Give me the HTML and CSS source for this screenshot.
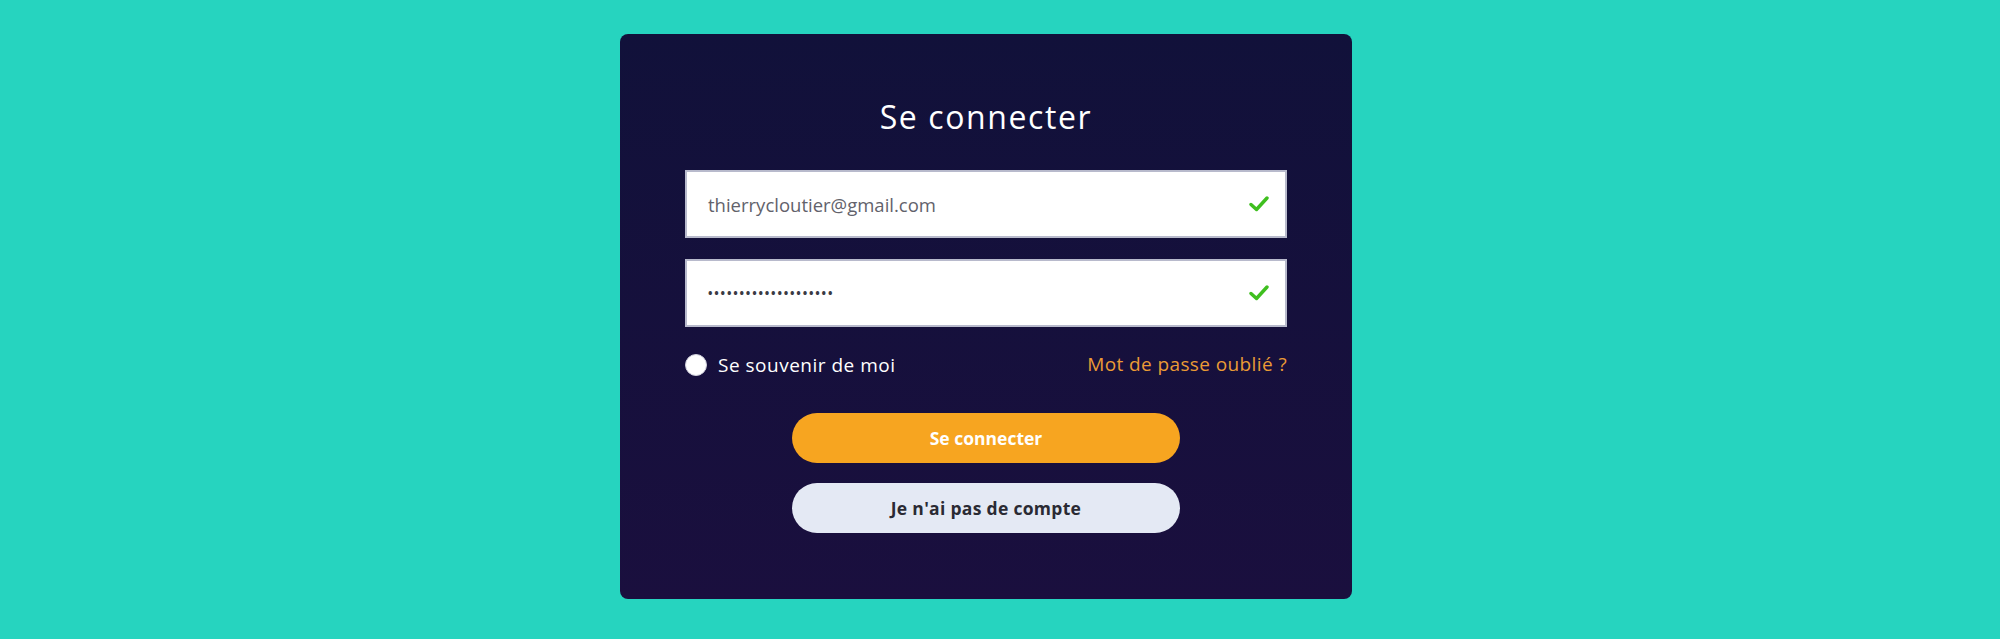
FILE: index.html
```html
<!DOCTYPE html>
<html lang="fr">
<head>
    <meta charset="UTF-8">
    <meta name="viewport" content="width=device-width, initial-scale=1.0">
    <title>Se connecter</title>
    <link rel="stylesheet" href="styles.css">
</head>
<body>
    <div class="page">
        <form class="login-card">
            <h1 class="login-title">Se connecter</h1>

            <div class="field">
                <span class="field-value">thierrycloutier@gmail.com</span>
                <svg class="field-check" viewBox="0 0 20 16" width="20" height="16">
                    <polyline points="2,8.5 7.5,13.5 18,2" />
                </svg>
            </div>
            <div class="field">
                <span class="field-value field-password">••••••••••••••••••••</span>
                <svg class="field-check" viewBox="0 0 20 16" width="20" height="16">
                    <polyline points="2,8.5 7.5,13.5 18,2" />
                </svg>
            </div>

            <div class="options">
                <label class="remember">
                    <span class="remember-box"></span>
                    Se souvenir de moi
                </label>
                <a class="forgot" href="#">Mot de passe oublié ?</a>
            </div>

            <button type="button" class="btn btn-primary">Se connecter</button>
            <button type="button" class="btn btn-secondary">Je n'ai pas de compte</button>
        </form>
    </div>
</body>
</html>
```

FILE: styles.css
```css
body {
    margin: 0;
    background-color: #26d4bf;
    font-family: "Open Sans", "Liberation Sans", sans-serif;
}
.page {
    display: flex;
    justify-content: center;
    padding: 34px 28px 39px 0;
}
.login-card {
    width: 602px;
    padding: 63px 65px 66px;
    border-radius: 8px;
    background: linear-gradient(180deg, #11113a 0%, #1a0f3e 100%);
    display: flex;
    flex-direction: column;
}
.login-title {
    margin: 0 0 33px;
    color: #ffffff;
    font-size: 32px;
    font-weight: 500;
    letter-spacing: 1.6px;
    line-height: 40px;
    text-align: center;
}
.field {
    height: 64px;
    border: 2px solid #b8bacc;
    background-color: #ffffff;
    display: flex;
    align-items: center;
    justify-content: space-between;
    padding: 0 16px 0 21px;
}
.field + .field {
    margin-top: 21px;
}
.field-value {
    color: #62626b;
    font-size: 18.5px;
    font-weight: 400;
    letter-spacing: 0;
}
.field-password {
    font-size: 12px;
    font-weight: 700;
    letter-spacing: 1.8px;
    color: #3a3a44;
}
.field-check {
    fill: none;
    stroke: #3fbf1f;
    stroke-width: 3.4;
    stroke-linecap: round;
    stroke-linejoin: round;
}
.options {
    display: flex;
    justify-content: space-between;
    align-items: center;
    margin-top: 25px;
    height: 26px;
}
.remember {
    display: flex;
    align-items: center;
    gap: 11px;
    color: #ffffff;
    font-size: 19px;
    letter-spacing: 0.5px;
}
.remember-box {
    width: 22px;
    height: 22px;
    border-radius: 50%;
    background-color: #ffffff;
    box-sizing: border-box;
    border: 1px solid #d0d0dc;
}
.forgot {
    color: #eb9b35;
    font-size: 19px;
    letter-spacing: 0.4px;
    text-decoration: none;
    margin-top: -3px;
}
.btn {
    width: 388px;
    height: 50px;
    margin: 0 auto;
    border: none;
    border-radius: 25px;
    font-family: inherit;
    font-size: 17.5px;
    font-weight: 700;
    cursor: pointer;
}
.btn-primary {
    margin-top: 35px;
    background-color: #f7a520;
    color: #ffffff;
}
.btn-secondary {
    margin-top: 20px;
    background-color: #e4e9f4;
    color: #2a2a33;
    letter-spacing: 0.3px;
}
```
